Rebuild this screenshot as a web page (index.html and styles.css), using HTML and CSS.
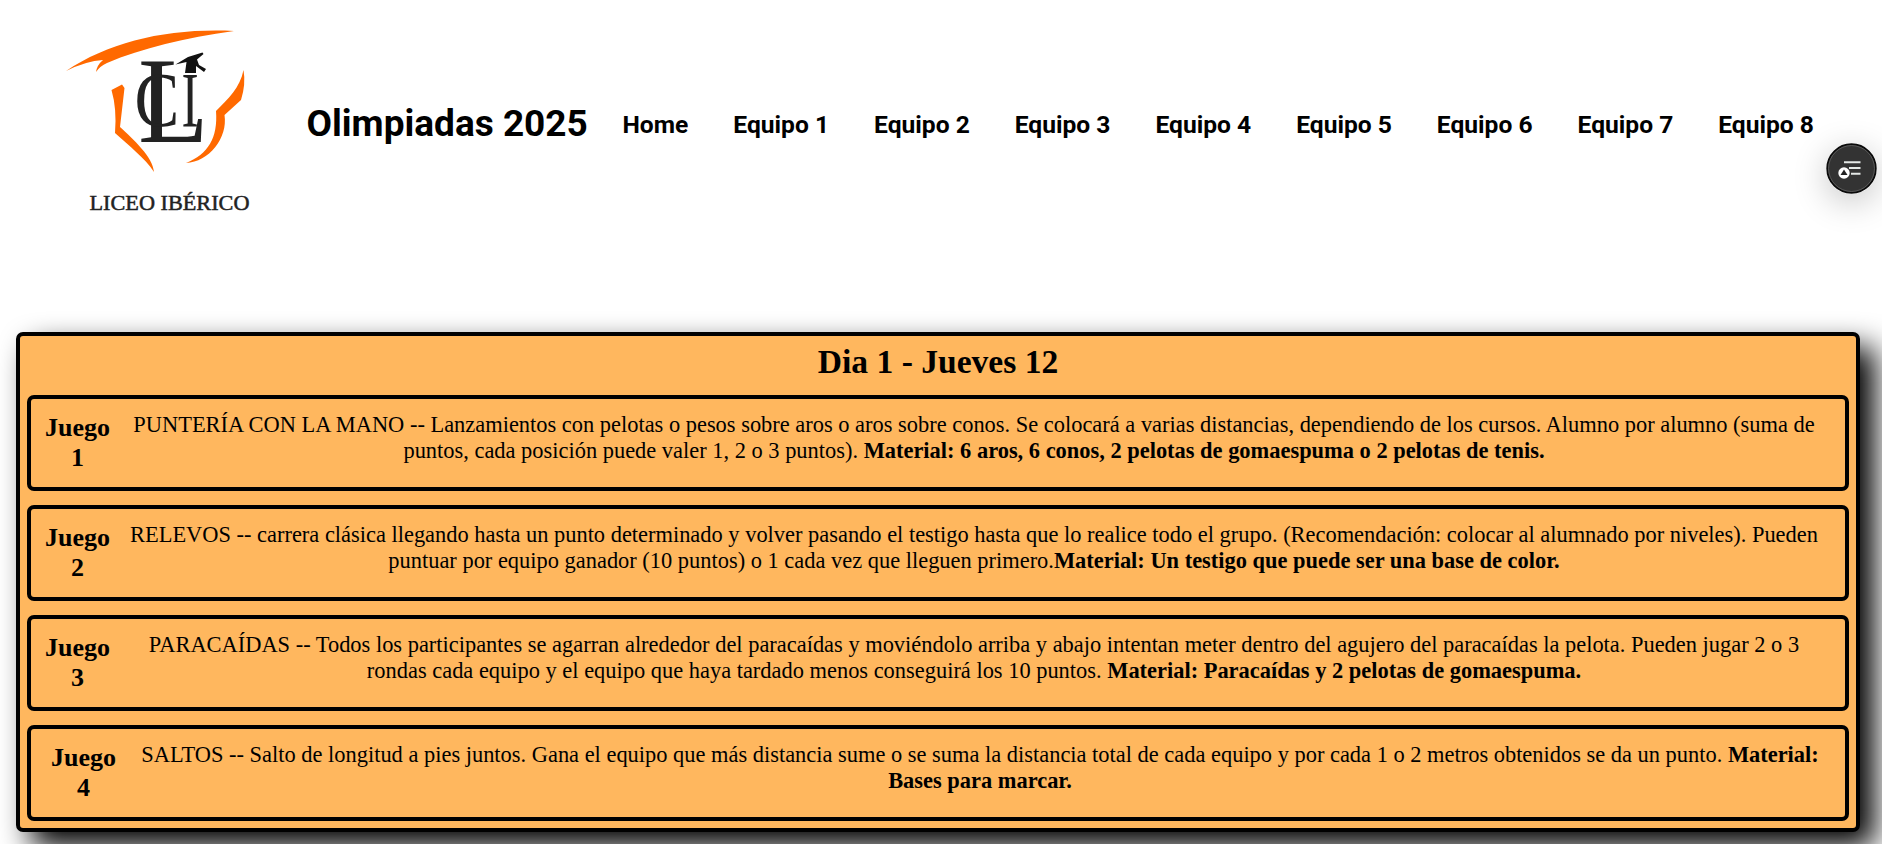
FILE: index.html
```html
<!DOCTYPE html>
<html lang="es">
<head>
<meta charset="utf-8">
<title>Olimpiadas 2025</title>
<link rel="stylesheet" href="styles.css">
</head>
<body>
<header class="header">
  <svg class="logo" viewBox="0 0 220 220" role="img" aria-label="Liceo Ibérico">
    <g fill="#ff6900">
      <path d="M16 61C61 31 119 18 184 21C135 28 92 38 57 53Q50 56 46 62Q47 55 53 50Q36 51 16 61Z"/>
      <path d="M61.500 80L72 74.500L74.500 78L70 117C83 129 103 147 104 162C95 148 79 136 65 123Q67 99 61.500 80Z"/>
      <path d="M193.500 60Q196 74 191 90L174.500 105C178 128 159 152 136 153C158 144 168 128 166 101C178 89 190 78 193.500 60Z"/>
    </g>
    <g class="monogram">
      <text transform="translate(88 131.500) scale(.95 1)" font-size="122">L</text>
      <text transform="translate(84.500 116) scale(.85 1)" font-size="79">C</text>
      <text transform="translate(131.500 116) scale(.66 1)" font-size="78">I</text>
    </g>
    <path fill="#111" d="M125.500 54.500L138 47L152.500 42.500L153.500 44L147 49.500L149 55L156 59L154 62L150 59L146 56L146 63L135 63L136.500 52Z"/>
    <text class="logo-name" x="39.500" y="200" textLength="160" lengthAdjust="spacingAndGlyphs">LICEO IBÉRICO</text>
  </svg>
  <h1 class="brand">Olimpiadas 2025</h1>
  <nav class="nav">
    <a>Home</a><a>Equipo 1</a><a>Equipo 2</a><a>Equipo 3</a><a>Equipo 4</a><a>Equipo 5</a><a>Equipo 6</a><a>Equipo 7</a><a>Equipo 8</a>
  </nav>
</header>
<main class="day">
  <h2 class="day-title">Dia 1 - Jueves 12</h2>
  <section class="game">
    <h3 class="game-label">Juego<br>1</h3>
    <p class="game-text">PUNTERÍA CON LA MANO -- Lanzamientos con pelotas o pesos sobre aros o aros sobre conos. Se colocará a varias distancias, dependiendo de los cursos. Alumno por alumno (suma de<br>puntos, cada posición puede valer 1, 2 o 3 puntos). <b>Material: 6 aros, 6 conos, 2 pelotas de gomaespuma o 2 pelotas de tenis.</b></p>
  </section>
  <section class="game">
    <h3 class="game-label">Juego<br>2</h3>
    <p class="game-text">RELEVOS -- carrera clásica llegando hasta un punto determinado y volver pasando el testigo hasta que lo realice todo el grupo. (Recomendación: colocar al alumnado por niveles). Pueden<br>puntuar por equipo ganador (10 puntos) o 1 cada vez que lleguen primero.<b>Material: Un testigo que puede ser una base de color.</b></p>
  </section>
  <section class="game">
    <h3 class="game-label">Juego<br>3</h3>
    <p class="game-text">PARACAÍDAS -- Todos los participantes se agarran alrededor del paracaídas y moviéndolo arriba y abajo intentan meter dentro del agujero del paracaídas la pelota. Pueden jugar 2 o 3<br>rondas cada equipo y el equipo que haya tardado menos conseguirá los 10 puntos. <b>Material: Paracaídas y 2 pelotas de gomaespuma.</b></p>
  </section>
  <section class="game game-wide">
    <h3 class="game-label">Juego<br>4</h3>
    <p class="game-text">SALTOS -- Salto de longitud a pies juntos. Gana el equipo que más distancia sume o se suma la distancia total de cada equipo y por cada 1 o 2 metros obtenidos se da un punto. <b>Material:<br>Bases para marcar.</b></p>
  </section>
</main>
<button class="fab" aria-label="Resumen">
  <svg viewBox="0 0 51 51" width="51" height="51">
    <circle cx="25.500" cy="25.500" r="24.200" fill="#333" stroke="#0a0a0a" stroke-width="2"/>
    <circle cx="25.500" cy="25.500" r="23" fill="none" stroke="#666" stroke-width=".8"/>
    <path d="M18 19.200H34.500M23 25H34.500M25 30.800H34.500" stroke="#e4e8e6" stroke-width="2"/>
    <circle cx="18" cy="30" r="5.700" fill="#fff"/>
    <path d="M18 26.500L21.500 32H14.500Z" fill="#222"/>
  </svg>
</button>
</body>
</html>
```
FILE: styles.css
```css
* { box-sizing: border-box; }
html, body { height: 100%; overflow: hidden; }
body { margin: 0; background: #fff; color: #000; font-family: "Liberation Serif", "Times New Roman", serif; }
.header { display: flex; align-items: flex-start; height: 332px; padding: 10px 0 0 50px; font-family: Roboto, sans-serif; white-space: nowrap; }
.logo { flex: none; width: 220px; height: 220px; }
.monogram { font-family: "Liberation Serif", serif; fill: #222; }
.logo-name { font-family: "Liberation Serif", serif; font-size: 22px; fill: #222; stroke: #222; stroke-width: .5px; }
.brand { flex: none; width: 316px; margin: 92px 0 0 36.5px; font-size: 37px; line-height: 44px; font-weight: 700; }
.nav { display: flex; gap: 45px; margin-top: 100px; font-size: 24.6px; line-height: 30px; font-weight: 700; }
.day { width: 1844px; height: 500px; margin-left: 16px; padding: 7px; border: 4px solid #000; border-radius: 7px; background: #ffb75e; box-shadow: 15px 15px 30px #000; }
.day-title { height: 52px; margin: 0; font-size: 33.6px; line-height: 38px; text-align: center; }
.game { display: flex; height: 96px; margin-bottom: 14px; border: 4px solid #000; border-radius: 7px; white-space: nowrap; text-align: center; }
.game-label { flex: none; width: 93px; margin: 14px 0 0; font-size: 26px; line-height: 30px; }
.game-wide .game-label { width: 105px; }
.game-text { flex: 1; margin: 13px 21px 0 0; font-size: 22.43px; line-height: 26px; }
.fab { position: fixed; left: 1826px; top: 143px; width: 51px; height: 51px; padding: 0; border: 0; border-radius: 50%; background: none; box-shadow: 0 8px 34px rgba(0, 0, 0, .23); }
.fab svg { display: block; }
```
